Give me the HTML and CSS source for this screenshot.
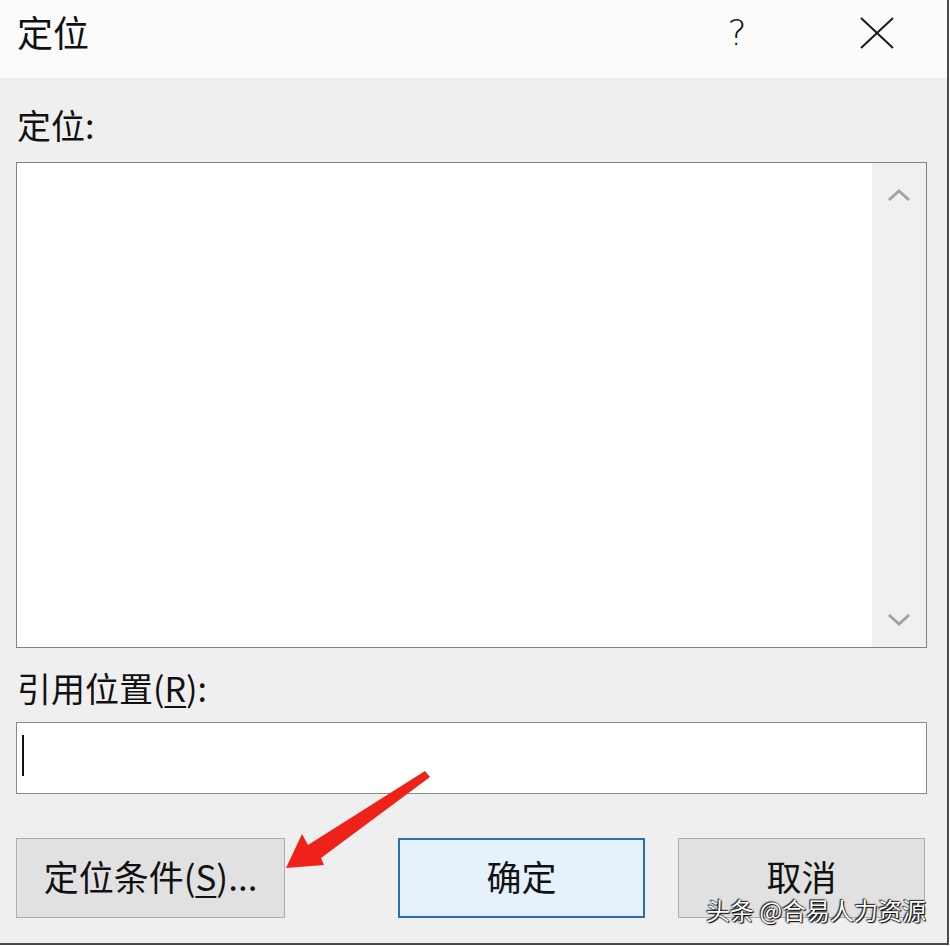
FILE: index.html
```html
<!DOCTYPE html>
<html lang="zh-CN">

<head>
	<meta charset="UTF-8">
	<title>定位</title>
	<link rel="stylesheet" href="styles.css">
</head>

<body>
	<div class="dialog">
		<div class="titlebar">
			<span class="title">定位</span>
			<span class="tb-btn help">?</span>
			<span class="tb-btn close">
				<svg width="34" height="32" viewBox="0 0 34 32">
					<path d="M1 1 L33 31 M33 1 L1 31" stroke="#1a1a1a" stroke-width="2" fill="none" />
				</svg>
			</span>
		</div>
		<div class="content">
			<div class="label first">定位:</div>
			<div class="listbox">
				<div class="list-items"></div>
				<div class="scrollbar">
					<svg class="chev" width="24" height="14" viewBox="0 0 24 14">
						<path d="M2 12 L12 3 L22 12" stroke="#a2a2a2" stroke-width="3" fill="none" />
					</svg>
					<svg class="chev" width="24" height="14" viewBox="0 0 24 14">
						<path d="M2 2 L12 11 L22 2" stroke="#a2a2a2" stroke-width="3" fill="none" />
					</svg>
				</div>
			</div>
			<div class="label">引用位置(<u>R</u>):</div>
			<div class="textbox"><span class="caret"></span></div>
			<div class="buttons">
				<span class="btn special">定位条件(<u>S</u>)...</span>
				<span class="btn default">确定</span>
				<span class="btn">取消</span>
			</div>
		</div>
		<svg class="arrow" width="950" height="946" viewBox="0 0 950 946">
			<polygon points="425,771 430,777 321,858 324,865 286,868 302,834 308,845" fill="#ef2219" />
		</svg>
		<div class="watermark">头条 @合易人力资源</div>
	</div>
</body>

</html>
```

FILE: styles.css
```css
body {
	margin: 0;
	background: #ffffff;
	font-family: "Noto Sans CJK SC", "Liberation Sans", sans-serif;
	color: #111111;
}

.dialog {
	position: relative;
	width: 947px;
	height: 943px;
	background: #efeff0;
	border-right: 2px solid #4a4a4a;
	border-bottom: 2px solid #4a4a4a;
}

.titlebar {
	display: flex;
	align-items: center;
	height: 78px;
	background: #fbfbfb;
}
.title {
	flex: 1;
	padding-left: 17px;
	margin-top: -17px;
	font-size: 36px;
	line-height: 1;
}
.tb-btn {
	display: flex;
	justify-content: center;
	width: 140px;
	margin-top: -12px;
}
.help {
	font-family: "DejaVu Sans", sans-serif;
	font-weight: 200;
	font-size: 36px;
	line-height: 1;
}

.content {
	padding: 0 20px 0 16px;
}

.label {
	font-size: 34px;
	line-height: 1;
	padding: 23px 0 17px 1px;
}
.label.first {
	padding-top: 30px;
	padding-bottom: 20px;
}
.label u {
	text-underline-offset: 4px;
	text-decoration-thickness: 2px;
}

.listbox {
	display: flex;
	height: 484px;
	border: 1px solid #828282;
	background: #ffffff;
}
.list-items {
	flex: 1;
}
.scrollbar {
	display: flex;
	flex-direction: column;
	justify-content: space-between;
	align-items: center;
	width: 54px;
	padding: 25px 0 20px;
	background: #f0f0f0;
}

.textbox {
	box-sizing: border-box;
	height: 72px;
	border: 1px solid #8a8a8a;
	background: #ffffff;
	padding: 12px 0 0 5px;
}
.caret {
	display: block;
	width: 2px;
	height: 41px;
	background: #111111;
}

.buttons {
	display: flex;
	gap: 33px;
	margin-top: 44px;
}
.btn {
	display: flex;
	align-items: center;
	justify-content: center;
	box-sizing: border-box;
	width: 247px;
	height: 80px;
	border: 1px solid #adadad;
	background: #e1e1e1;
	font-size: 35px;
	line-height: 1;
	padding-bottom: 6px;
}
.btn.special {
	width: 269px;
	margin-right: 80px;
}
.btn.default {
	border: 2px solid #2a6fae;
	background: #e5f1fb;
}
.btn u {
	text-underline-offset: 5px;
	text-decoration-thickness: 2px;
}

.arrow {
	position: absolute;
	left: 0;
	top: 0;
	pointer-events: none;
}

.watermark {
	position: absolute;
	left: 706px;
	top: 896px;
	font-size: 24px;
	line-height: 1.2;
	color: #ffffff;
	text-shadow: 0 0 2px #000000, 1px 1px 1px #000000, -1px -1px 1px #333333;
}
```
